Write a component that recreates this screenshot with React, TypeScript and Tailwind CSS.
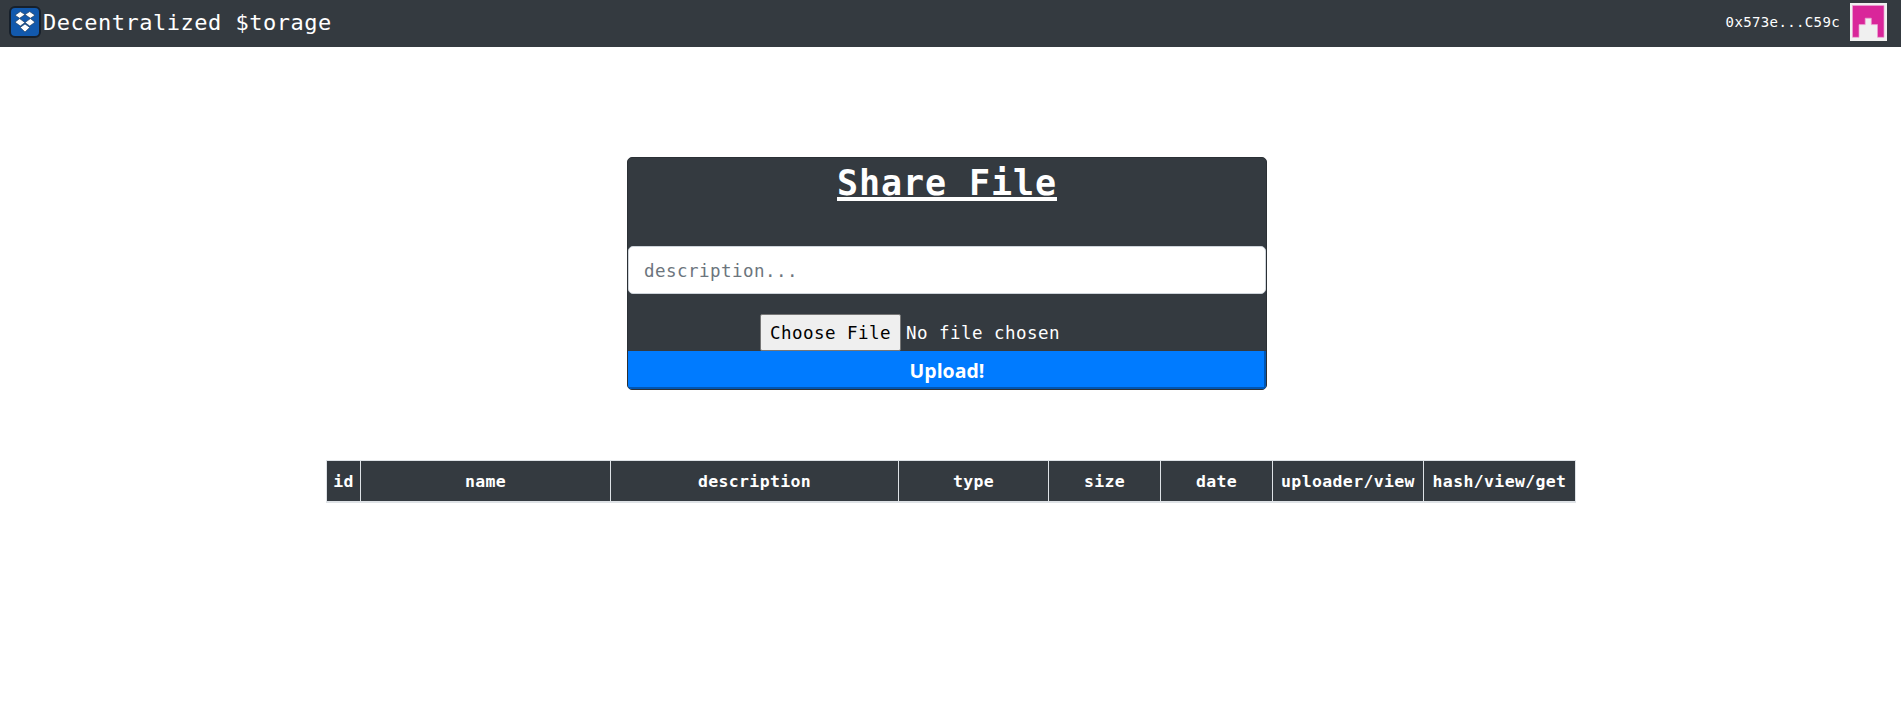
const columns = ['id', 'name', 'description', 'type', 'size', 'date', 'uploader/view', 'hash/view/get'];

function BoxLogo() {
  return (
    <svg viewBox="0 0 32 32" className="block h-8 w-8">
      <rect x="1" y="1" width="30" height="30" rx="5" fill="#1259ad" stroke="#17202b" strokeWidth="2" />
      <g fill="#fff" stroke="#16304f" strokeWidth="0.6">
        <path d="M11.3 5.6 16 8.6 10.6 12.2 6 9.2z" />
        <path d="M20.7 5.6 16 8.6 21.4 12.2 26 9.2z" />
        <path d="M10.6 12.6 16 16.6 11.3 20 6 16.2z" />
        <path d="M21.4 12.6 16 16.6 20.7 20 26 16.2z" />
        <path d="M11.2 21.4 16 18 20.8 21.4 16 26z" />
      </g>
    </svg>
  );
}

function Identicon() {
  return (
    <svg viewBox="0 0 37 38" className="block h-[38px] w-[37px]">
      <rect width="37" height="38" fill="#f0f0f0" />
      <path d="M2.5 2.5H34V34.3H27.5V21.6H21.3V15.2H15.2V21.6H9V34.3H2.5z" fill="#d9269a" stroke="#eca0d2" strokeWidth="0.7" />
    </svg>
  );
}

export default function App() {
  return (
    <div className="min-h-[706px] bg-white font-['DejaVu_Sans_Mono',monospace] text-white">
      <nav className="flex h-[47px] items-start justify-between bg-[#343a40] pr-[14px] pl-[9px]">
        <div className="flex pt-1.5">
          <BoxLogo />
          <span className="pl-[2px] text-[22px] leading-[33px] tracking-[0.51px]">Decentralized $torage</span>
        </div>
        <div className="flex pt-[3px]">
          <span className="pr-[10px] text-[14px] leading-[38px] tracking-[0.37px]">0x573e...C59c</span>
          <Identicon />
        </div>
      </nav>

      <main className="flex flex-col items-start pt-[110px]">
        <section className="ml-[627px] flex h-[233px] w-[640px] flex-col overflow-hidden rounded-[5px] border border-[#2b3035] bg-[#343a40]">
          <h1 className="flex h-[88px] justify-center text-[35px] leading-[50px] font-bold tracking-[0.92px]">
            <span className="h-[43px] border-b-4 border-white">Share File</span>
          </h1>
          <input
            type="text"
            placeholder="description..."
            className="h-12 w-full shrink-0 rounded-[5px] border border-[#ced4da] bg-white px-[15px] pt-0.5 text-[17.5px] tracking-[0.46px] text-[#495057] outline-none placeholder:text-[#6c757d]"
          />
          <div className="mt-5 flex h-[37px] shrink-0 pl-[132px] text-[17.5px] tracking-[0.46px]">
            <button type="button" className="h-[37px] w-[141px] rounded-[2px] border border-[#767676] bg-[#efefef] pt-px whitespace-nowrap text-black">
              Choose File
            </button>
            <span className="pl-[5px] leading-[38px]">No file chosen</span>
          </div>
          <button
            type="submit"
            className="h-[38px] w-full shrink-0 border-r-2 border-b-2 border-[#0056b3] bg-[#007bff] pt-1 pl-0.5 font-['Open_Sans',sans-serif] text-[19.5px] leading-[32px] font-bold"
          >
            Upload!
          </button>
        </section>

        <table className="mt-[70px] ml-[326px] w-[1250px] table-fixed border-collapse border border-[#dee2e6] text-[16.5px] tracking-[0.36px]">
          <colgroup>
            <col className="w-[34px]" />
            <col className="w-[250px]" />
            <col className="w-[288px]" />
            <col className="w-[150px]" />
            <col className="w-[112px]" />
            <col className="w-[112px]" />
            <col className="w-[151px]" />
            <col className="w-[152px]" />
          </colgroup>
          <thead>
            <tr className="h-[41px] bg-[#343a40]">
              {columns.map((name) => (
                <th key={name} className="border border-b-2 border-[#dee2e6] p-0 pt-0.5 text-center leading-[24px] font-bold">
                  {name}
                </th>
              ))}
            </tr>
          </thead>
        </table>
      </main>
    </div>
  );
}
